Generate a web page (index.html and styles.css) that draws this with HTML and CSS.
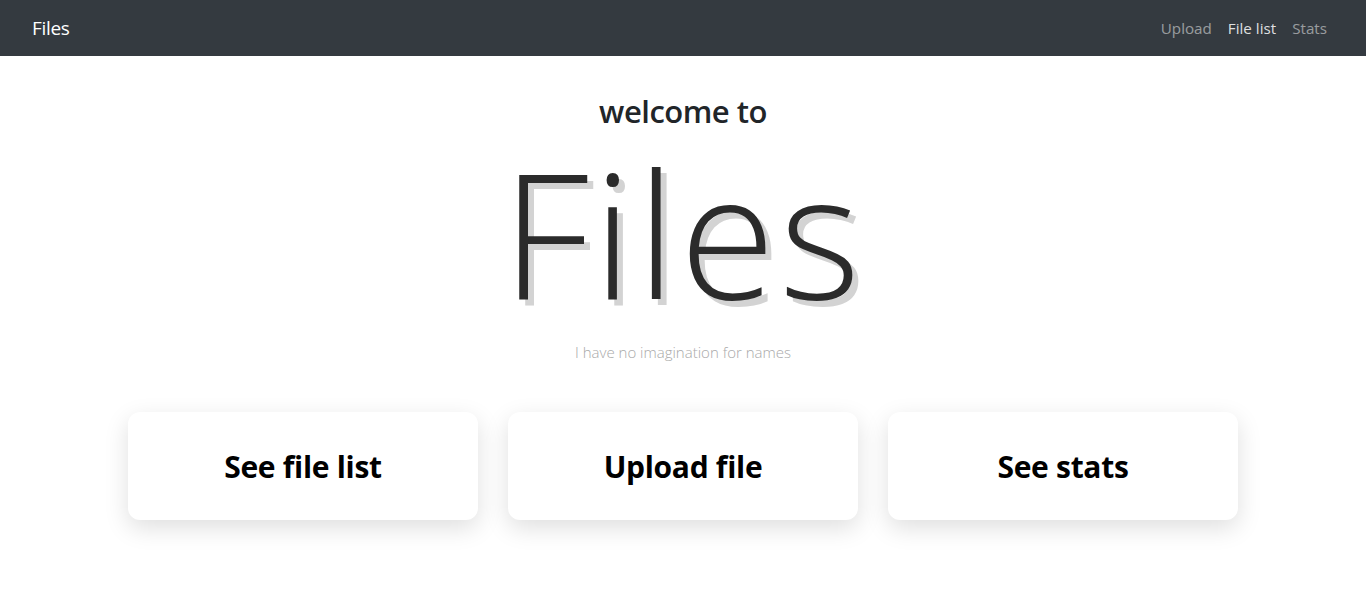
FILE: index.html
```html
<!DOCTYPE html>
<html lang="en">
<head>
<meta charset="utf-8">
<title>Files</title>
<link rel="stylesheet" href="styles.css">
</head>
<body>
<nav class="navbar">
  <a class="brand" href="#">Files</a>
  <div class="nav-links">
    <a class="nav-link" href="#">Upload</a>
    <a class="nav-link active" href="#">File list</a>
    <a class="nav-link" href="#">Stats</a>
  </div>
</nav>
<main class="main">
  <h2 class="welcome">welcome to</h2>
  <h1 class="title">Files</h1>
  <p class="tagline">I have no imagination for names</p>
  <div class="cards">
    <a class="card" href="#">See file list</a>
    <a class="card" href="#">Upload file</a>
    <a class="card" href="#">See stats</a>
  </div>
</main>
</body>
</html>
```
FILE: styles.css
```css
* { box-sizing: border-box; }
body {
  margin: 0;
  font-family: "Open Sans", "Noto Sans", sans-serif;
  color: #212529;
  background: #fff;
}
a { text-decoration: none; }
.navbar {
  height: 56px;
  background: #343a40;
  display: flex;
  align-items: center;
  justify-content: space-between;
  padding: 0 39px 0 32px;
}
.brand {
  color: #fff;
  font-size: 19px;
  letter-spacing: -0.3px;
}
.nav-links {
  display: flex;
  gap: 16px;
}
.nav-link {
  color: rgba(255,255,255,.5);
  font-size: 15.2px;
}
.nav-link.active { color: rgba(255,255,255,.85); }
.main {
  display: flex;
  flex-direction: column;
  align-items: center;
  padding: 40px 0 80px;
}
.welcome {
  margin: 0;
  font-size: 31px;
  font-weight: 600;
  line-height: 1;
  letter-spacing: -0.5px;
}
.title {
  margin: 18px 0 0;
  font-size: 174px;
  font-weight: 300;
  line-height: 1;
  color: #2b2b2b;
  letter-spacing: 4px;
  text-shadow: 6px 6px 0 #d3d3d3;
}
.tagline {
  margin: 23px 0 0;
  font-size: 15px;
  font-weight: 300;
  color: #a9a9a9;
}
.cards {
  margin-top: 50px;
  width: 1110px;
  display: grid;
  grid-template-columns: repeat(3, 1fr);
  gap: 30px;
}
.card {
  height: 108px;
  border-radius: 12px;
  background: #fff;
  box-shadow: 0 8px 24px rgba(0,0,0,.13);
  display: flex;
  align-items: center;
  justify-content: center;
  color: #000;
  font-size: 30px;
  font-weight: 700;
  letter-spacing: -0.3px;
}
```
